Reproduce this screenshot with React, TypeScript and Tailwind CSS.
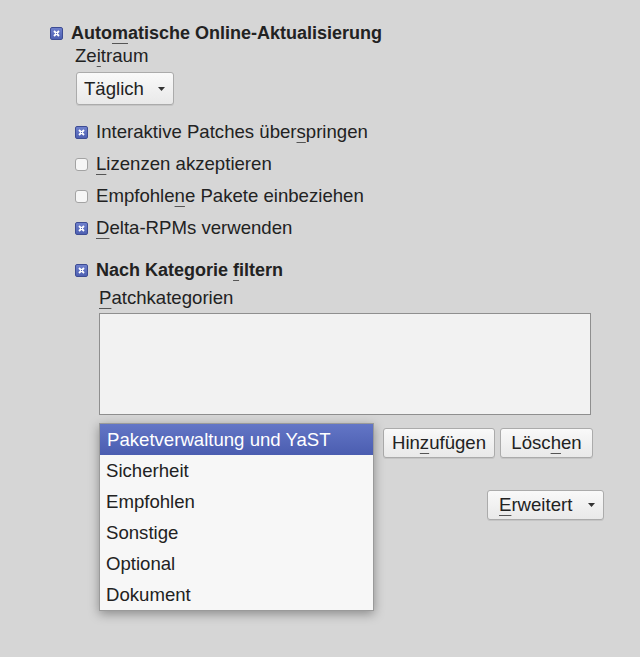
import React from 'react'

const font = { fontFamily: '"Liberation Sans", Arial, sans-serif' }

function Check({ checked }: { checked: boolean }) {
  if (!checked) {
    return (
      <span className="inline-block w-[13px] h-[13px] shrink-0 rounded-[3px] border border-[#a3a3a3] bg-[#f6f6f6]" />
    )
  }
  return (
    <span className="inline-flex w-[13px] h-[13px] shrink-0 items-center justify-center rounded-[2px] border border-[#3d4c94] bg-gradient-to-b from-[#6f80cc] to-[#4e60b2]">
      <svg width="7" height="7" viewBox="0 0 7 7">
        <path d="M1 1 L6 6 M6 1 L1 6" stroke="#fff" strokeWidth="1.8" />
        <rect x="3" y="3" width="1" height="1" fill="#5566b8" />
      </svg>
    </span>
  )
}

function Mn({ children }: { children: React.ReactNode }) {
  return <span className="underline decoration-[#555] underline-offset-[4px]">{children}</span>
}

function CheckRow({ checked, children, bold }: { checked: boolean; children: React.ReactNode; bold?: boolean }) {
  return (
    <div className="flex items-center gap-[8px] h-[32px]">
      <Check checked={checked} />
      <span className={bold ? 'font-bold text-[18px]' : ''}>{children}</span>
    </div>
  )
}

function Button({ children, className = '' }: { children?: React.ReactNode; className?: string }) {
  return (
    <div
      className={`flex items-center shrink-0 rounded-[3px] border border-[#ababab] bg-gradient-to-b from-[#f9f9f9] to-[#e9e9e9] shadow-[0_1px_0_rgba(0,0,0,0.08)] ${className}`}
    >
      {children}
    </div>
  )
}

function Caret() {
  return (
    <svg width="7" height="4" viewBox="0 0 7 4">
      <path d="M0 0 H7 L3.5 4 Z" fill="#333" />
    </svg>
  )
}

export default function App() {
  const items = ['Sicherheit', 'Empfohlen', 'Sonstige', 'Optional', 'Dokument']

  return (
    <div style={font} className="relative w-[640px] h-[657px] overflow-hidden bg-[#d6d6d6] text-[18.6px] text-[#222]">
      <div className="pl-[50px] pt-[17px]">
        <CheckRow checked bold>
          Auto<Mn>m</Mn>atische Online-Aktualisierung
        </CheckRow>

        <div className="pl-[25px]">
          <div className="leading-[22px] -mt-[4px]">
            Ze<Mn>i</Mn>traum
          </div>
          <Button className="mt-[5px] ml-[1px] w-[98px] h-[33px] pl-[7px] pr-[8px] justify-between">
            <span>Täglich</span>
            <Caret />
          </Button>

          <div className="mt-[11px]">
            <CheckRow checked>
              Interaktive Patches über<Mn>s</Mn>pringen
            </CheckRow>
            <CheckRow checked={false}>
              <Mn>L</Mn>izenzen akzeptieren
            </CheckRow>
            <CheckRow checked={false}>
              Empfohle<Mn>n</Mn>e Pakete einbeziehen
            </CheckRow>
            <CheckRow checked>
              <Mn>D</Mn>elta-RPMs verwenden
            </CheckRow>
          </div>

          <div className="mt-[10px]">
            <CheckRow checked bold>
              Nach Kategorie <Mn>f</Mn>iltern
            </CheckRow>
          </div>

          <div className="pl-[24px]">
            <div className="leading-[22px] mt-[1px]">
              <Mn>P</Mn>atchkategorien
            </div>
            <div className="mt-[4px] w-[492px] h-[102px] border border-[#8f8f8f] bg-[#f2f2f2]" />

            <div className="mt-[13px] flex items-start">
              {/* category combo, covered by its open popup */}
              <Button className="w-[275px] h-[30px]" />
              <Button className="ml-[9px] h-[30px] w-[112px] justify-center">
                Hin<Mn>z</Mn>ufügen
              </Button>
              <Button className="ml-[5px] h-[30px] w-[93px] justify-center">
                Lösc<Mn>h</Mn>en
              </Button>
            </div>

            <div className="mt-[32px] pl-[388px]">
              <Button className="w-[117px] h-[30px] pl-[11px] pr-[8px] justify-between">
                <span>
                  <Mn>E</Mn>rweitert
                </span>
                <Caret />
              </Button>
            </div>
          </div>
        </div>
      </div>

      {/* open combo popup */}
      <div className="absolute left-[99px] top-[423px] w-[275px] border border-[#9a9a9a] bg-[#f7f7f7] shadow-[0_3px_10px_rgba(0,0,0,0.35)]">
        <div className="h-[31px] flex items-center pl-[7px] text-white bg-gradient-to-b from-[#6376c6] to-[#4b5db0]">
          Paketverwaltung und YaST
        </div>
        {items.map((it) => (
          <div key={it} className="h-[31px] flex items-center pl-[6px]">
            {it}
          </div>
        ))}
      </div>
    </div>
  )
}
